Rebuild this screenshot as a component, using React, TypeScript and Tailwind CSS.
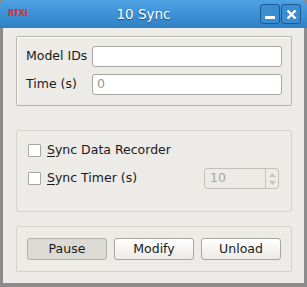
import React from 'react';

const font = { fontFamily: '"DejaVu Sans", "Liberation Sans", sans-serif' };

function Check({ label }: { label: string }) {
  return (
    <label className="flex items-center gap-[6px] h-[21px]">
      <span className="w-[13px] h-[13px] bg-white border border-[#a9a5a0] rounded-[1px]" />
      <span className="text-[12.5px] text-[#1a1a1a]">
        <span className="underline underline-offset-2">S</span>
        {label.slice(1)}
      </span>
    </label>
  );
}

function Btn({ label, pressed }: { label: string; pressed?: boolean }) {
  return (
    <button
      className={
        'w-[80px] h-[22px] rounded-[3px] border text-[12.5px] text-[#1a1a1a] ' +
        (pressed
          ? 'bg-[#dcdad5] border-[#b4b0aa]'
          : 'bg-gradient-to-b from-white to-[#eceae6] border-[#a9a5a0]')
      }
    >
      {label}
    </button>
  );
}

export default function App() {
  return (
    <div className="w-[307px] h-[287px] flex flex-col bg-[#8c8c8c]" style={font}>
      {/* title bar */}
      <div className="h-[28px] rounded-t-[5px] bg-gradient-to-b from-[#4ea2e3] to-[#2f80c6] flex items-center pl-[8px] pr-[6px] relative">
        <span className="text-[8px] font-bold text-[#d8302a] tracking-tight">RTXI</span>
        <span className="absolute left-0 right-[20px] text-center text-[13.5px] text-white [text-shadow:0_1px_1px_#1b4f80]">
          10 Sync
        </span>
        <div className="ml-auto flex gap-[1px]">
          <div className="w-[20px] h-[20px] rounded-[3px] border border-[#1c5a94] bg-[#3b8dd2] flex items-end justify-center pb-[4px]">
            <div className="w-[10px] h-[3px] bg-white" />
          </div>
          <div className="w-[20px] h-[20px] rounded-[3px] border border-[#1c5a94] bg-[#3b8dd2] flex items-center justify-center">
            <svg width="11" height="11" viewBox="0 0 11 11">
              <path d="M1.5 1.5 L9.5 9.5 M9.5 1.5 L1.5 9.5" stroke="white" strokeWidth="2.4" />
            </svg>
          </div>
        </div>
      </div>

      {/* body */}
      <div className="flex-1 mx-[3px] mb-[4px] bg-[#edebe7] pt-[8px] pl-[13px] pr-[12px] flex flex-col">
        <div className="h-[70px] border border-[#b8b4ae] shadow-[inset_1px_1px_0_#fff] rounded-[2px] pl-[9px] pr-[9px] pt-[9px] flex flex-col gap-[7px]">
          <div className="flex items-center">
            <span className="w-[66px] text-[12.5px] text-[#1a1a1a]">Model IDs</span>
            <div className="w-[190px] h-[21px] bg-white border border-[#a9a5a0] rounded-[3px]" />
          </div>
          <div className="flex items-center">
            <span className="w-[66px] text-[12.5px] text-[#1a1a1a]">Time (s)</span>
            <div className="w-[190px] h-[21px] bg-white border border-[#a9a5a0] rounded-[3px] pl-[4px] text-[12.5px] text-[#9a9792] flex items-center">
              0
            </div>
          </div>
        </div>

        <div className="mt-[24px] h-[82px] border border-[#d6d3ce] rounded-[2px] pl-[11px] pr-[12px] pt-[9px] flex flex-col gap-[7px]">
          <Check label="Sync Data Recorder" />
          <div className="flex items-center">
            <Check label="Sync Timer (s)" />
            <div className="ml-auto w-[75px] h-[21px] border border-[#c4c0ba] rounded-[3px] bg-[#edebe7] flex">
              <span className="flex-1 pl-[5px] text-[12.5px] text-[#a9a6a1] flex items-center">10</span>
              <div className="w-[13px] border-l border-[#c4c0ba] flex flex-col items-center justify-center gap-[4px]">
                <svg width="7" height="4" viewBox="0 0 7 4"><path d="M0 4 L3.5 0 L7 4Z" fill="#c8c5c0" /></svg>
                <svg width="7" height="4" viewBox="0 0 7 4"><path d="M0 0 L3.5 4 L7 0Z" fill="#c8c5c0" /></svg>
              </div>
            </div>
          </div>
        </div>

        <div className="mt-[14px] h-[46px] border border-[#d6d3ce] rounded-[2px] pl-[10px] flex items-center gap-[7px]">
          <Btn label="Pause" pressed />
          <Btn label="Modify" />
          <Btn label="Unload" />
        </div>
      </div>
    </div>
  );
}
